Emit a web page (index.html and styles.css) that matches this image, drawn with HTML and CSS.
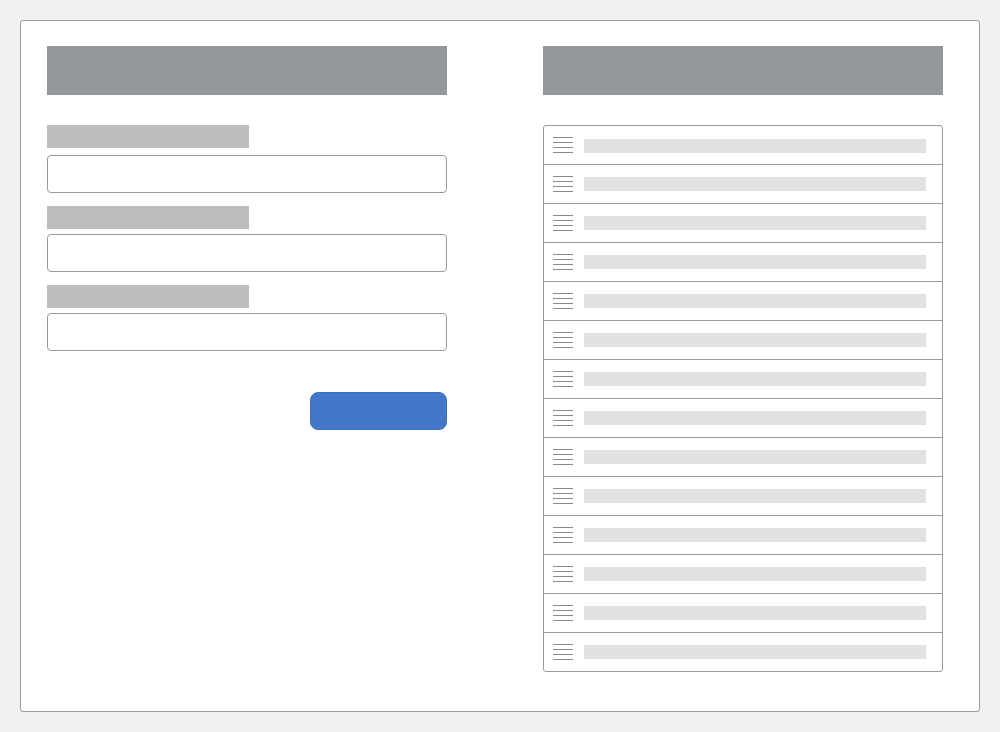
FILE: index.html
```html
<!DOCTYPE html>
<html>
<head>
  <title>Form and list</title>
  <meta charset="UTF-8"/>
  <link rel="stylesheet" href="styles.css">
</head>

<body>
<div class="card">
  <!-- left: form -->
  <section class="column">
    <div class="title-bar"></div>
    <form class="form">
      <div class="field">
        <div class="label-bar"></div>
        <input class="text-input" type="text"/>
      </div>
      <div class="field">
        <div class="label-bar"></div>
        <input class="text-input" type="text"/>
      </div>
      <div class="field">
        <div class="label-bar"></div>
        <input class="text-input" type="text"/>
      </div>
      <div class="actions">
        <button class="submit-btn" type="button"></button>
      </div>
    </form>
  </section>

  <!-- right: list -->
  <section class="column">
    <div class="title-bar"></div>
    <ul class="list" id="list"></ul>
  </section>
</div>
<script>
  // 14 rows, each with a handle icon and a placeholder bar
  const list = document.getElementById("list");
  for (let i = 0; i < 14; i++) {
    const li = document.createElement("li");
    li.className = "list-row";
    li.innerHTML = '<span class="handle"><i></i><i></i><i></i><i></i></span><span class="row-bar"></span>';
    list.appendChild(li);
  }
</script>
</body>
</html>
```

FILE: styles.css
```css
* {
  box-sizing: border-box;
}

body {
  background-color: #f1f1f1;
  font-family: "Liberation Sans", Arial, sans-serif;
  margin: 0;
  padding: 20px;
}

.card {
  background-color: #fff;
  border: 1px solid #9a9a9a;
  border-radius: 3px;
  width: 960px;
  height: 692px;
  padding: 25px 0 0 26px;
  display: flex;
  gap: 96px;
}

.column {
  width: 400px;
}

.title-bar {
  background-color: #95989a;
  height: 49px;
}

/* form */
.form {
  margin: 30px 0 0;
}

.field {
  margin-bottom: 13px;
}

.label-bar {
  background-color: #bcbdbf;
  width: 202px;
  height: 23px;
  margin-bottom: 5px;
}

.field:first-child .label-bar {
  margin-bottom: 7px;
}

.text-input {
  display: block;
  width: 400px;
  height: 38px;
  border: 1px solid #9a9a9a;
  border-radius: 4px;
  background: #fff;
  margin: 0;
}

.actions {
  display: flex;
  justify-content: flex-end;
  padding-top: 28px;
}

.submit-btn {
  background-color: #4377ca;
  border: 1px solid #3d6fbf;
  border-radius: 8px;
  width: 137px;
  height: 38px;
  cursor: pointer;
}

/* list */
.list {
  list-style: none;
  margin: 30px 0 0;
  padding: 0;
  border: 1px solid #9a9a9a;
  border-radius: 3px;
}

.list-row {
  height: 39px;
  display: flex;
  align-items: center;
  padding: 0 16px 0 9px;
  border-top: 1px solid #9a9a9a;
}

.list-row:first-child {
  height: 38px;
  border-top: none;
}

.list-row:first-child .row-bar {
  margin-top: 2px;
}

.handle {
  display: flex;
  flex-direction: column;
  gap: 4px;
  width: 20px;
  margin-right: 11px;
}

.handle i {
  display: block;
  height: 1px;
  background-color: #8a8a8a;
}

.row-bar {
  flex: 1;
  height: 14px;
  background-color: #e1e1e1;
}
```
